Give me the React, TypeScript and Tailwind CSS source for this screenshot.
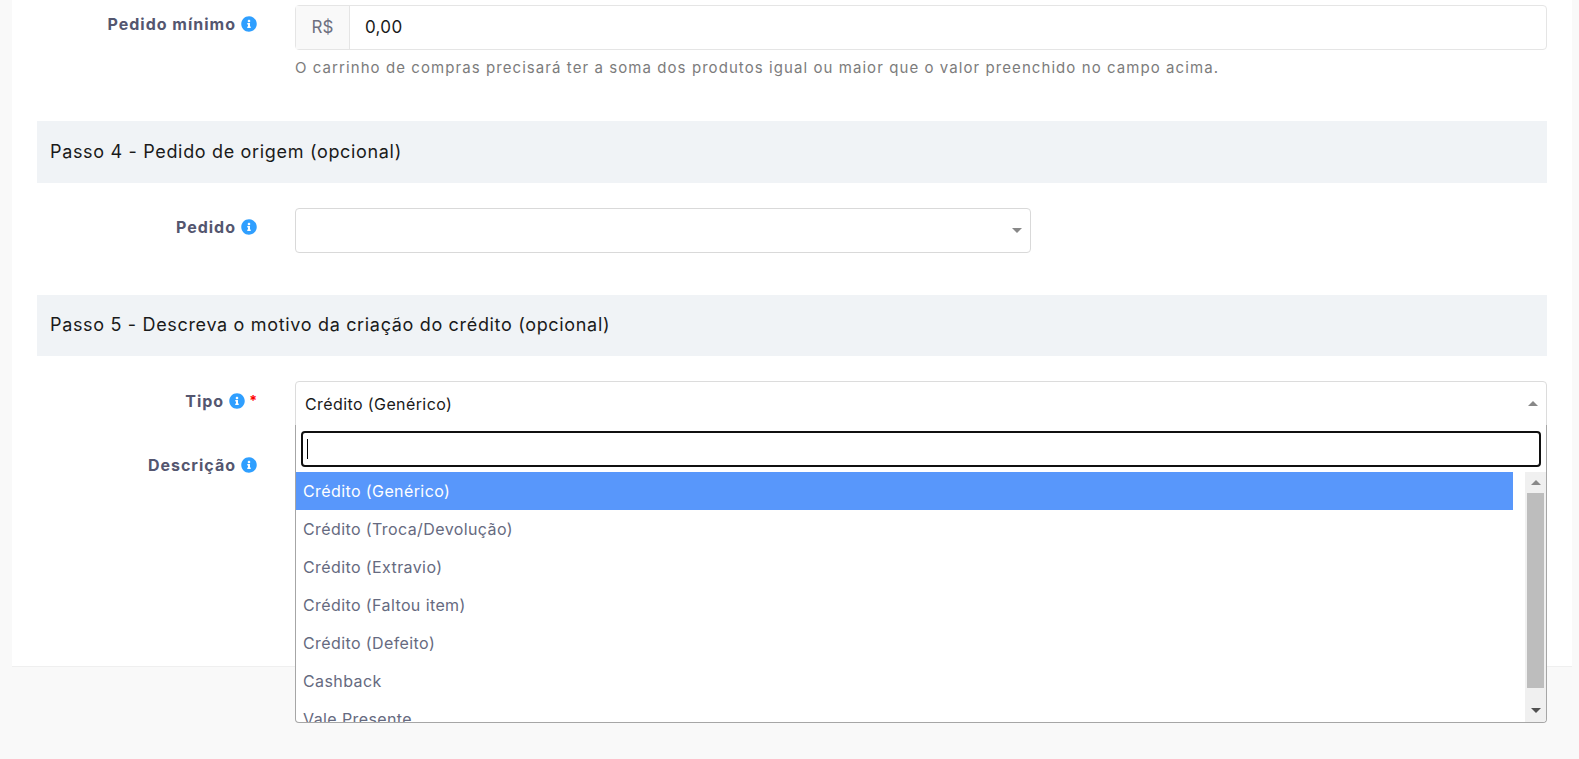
import { FaInfoCircle } from 'react-icons/fa';

const fontStack = "font-['Inter','Noto_Sans',sans-serif]";

const options = [
    'Crédito (Troca/Devolução)',
    'Crédito (Extravio)',
    'Crédito (Faltou item)',
    'Crédito (Defeito)',
    'Cashback',
    'Vale Presente',
];

function Label({ text, required, className }: { text: string; required?: boolean; className?: string }) {
    return (
        <div className={`flex w-[258px] shrink-0 items-center justify-end pr-[38px] text-[16px] font-bold tracking-[1px] text-[#54566f] ${className ?? ''}`}>
            <span>{text}</span>
            <FaInfoCircle className="ml-[5px] text-[16px] text-[#2f9fff]" />
            {required && <span className="ml-[4px] -mr-[1px] text-[14px] leading-none text-[#f00]">*</span>}
        </div>
    );
}

function SectionHeading({ children, className }: { children: string; className?: string }) {
    return (
        <div className={`flex items-center bg-[#f0f3f6] px-[13px] pb-[2px] text-[18px] tracking-[0.67px] text-[#1a1a1a] ${className ?? ''}`}>
            {children}
        </div>
    );
}

function Caret({ up }: { up?: boolean }) {
    return (
        <div className={`h-0 w-0 border-x-[5px] border-x-transparent ${up ? 'border-b-[5px] border-b-[#888]' : 'border-t-[5px] border-t-[#888]'}`} />
    );
}

function TipoDropdown() {
    return (
        <div className="absolute left-0 right-0 top-[44px] z-10 h-[298px] overflow-hidden rounded-b-[4px] border-x border-b border-[#a6a6a6] bg-white">
            <div className="px-[5px] pb-[5px] pt-[6px]">
                <div className="flex h-[36px] items-center rounded-[4px] border-2 border-[#101010] bg-white pl-[4px]">
                    <div className="h-[20px] w-px bg-black" />
                </div>
            </div>
            <div className="flex">
                <div className="min-w-0 flex-1">
                    <div className="flex h-[38px] items-center bg-[#5897fb] px-[7px] text-[16px] tracking-[0.4px] text-white">Crédito (Genérico)</div>
                    {options.map((o) => (
                        <div key={o} className="flex h-[38px] items-center px-[7px] text-[16px] tracking-[0.4px] text-[#666a80]">{o}</div>
                    ))}
                </div>
                <div className="ml-[12px] flex w-[21px] shrink-0 flex-col items-center bg-[#f0f0f0]">
                    <div className="flex h-[21px] items-center justify-center"><Caret up /></div>
                    <div className="h-[195px] w-[17px] bg-[#bdbdbd]" />
                    <div className="flex h-[33px] items-end justify-center pb-[8px]">
                        <div className="h-0 w-0 border-x-[5px] border-t-[5px] border-x-transparent border-t-[#505050]" />
                    </div>
                </div>
            </div>
        </div>
    );
}

export default function App() {
    return (
        <div className={`h-[759px] w-full overflow-hidden bg-[#f9f9f9] ${fontStack}`}>
            <div className="ml-[12px] mr-[7px] h-[667px] border-b border-[#efefef] bg-white px-[25px] pt-[5px]">
                {/* Pedido minimo */}
                <div className="flex">
                    <Label text="Pedido mínimo" className="h-[37px]" />
                    <div className="min-w-0 flex-1">
                        <div className="flex h-[45px] rounded-[4px] border border-[#e5e5e5]">
                            <div className="flex w-[54px] items-center justify-center border-r border-[#e5e5e5] bg-[#f9f9f9] text-[17px] text-[#6e7080]">R$</div>
                            <div className="flex flex-1 items-center pl-[15px] text-[17px] tracking-[0.3px] text-[#1a1a1a]">0,00</div>
                        </div>
                        <p className="mt-[8px] h-[20px] text-[15px] leading-[20px] tracking-[1.07px] text-[#7c7c7c]">O carrinho de compras precisará ter a soma dos produtos igual ou maior que o valor preenchido no campo acima.</p>
                    </div>
                </div>

                {/* Passo 4 */}
                <div className="mt-[43px]"><SectionHeading className="h-[62px]">Passo 4 - Pedido de origem (opcional)</SectionHeading></div>
                <div className="mt-[25px] flex">
                    <Label text="Pedido" className="h-[37px]" />
                    <div className="relative flex h-[45px] w-[736px] items-center justify-end rounded-[4px] border border-[#d9d9d9] pr-[8px]">
                        <Caret />
                    </div>
                </div>

                {/* Passo 5 */}
                <div className="mt-[42px]"><SectionHeading className="h-[61px]">Passo 5 - Descreva o motivo da criação do crédito (opcional)</SectionHeading></div>
                <div className="mt-[25px] flex">
                    <div className="shrink-0">
                        <Label text="Tipo" required className="h-[39px]" />
                        <Label text="Descrição" className="mt-[26px] h-[37px]" />
                    </div>
                    <div className="relative min-w-0 flex-1">
                        <div className="flex h-[45px] items-center justify-between rounded-t-[4px] border border-[#dcdcdc] pl-[9px] pr-[8px] text-[16px] tracking-[0.4px] text-[#1a1a1a]">
                            <span>Crédito (Genérico)</span>
                            <Caret up />
                        </div>
                        <TipoDropdown />
                    </div>
                </div>
            </div>
        </div>
    );
}
